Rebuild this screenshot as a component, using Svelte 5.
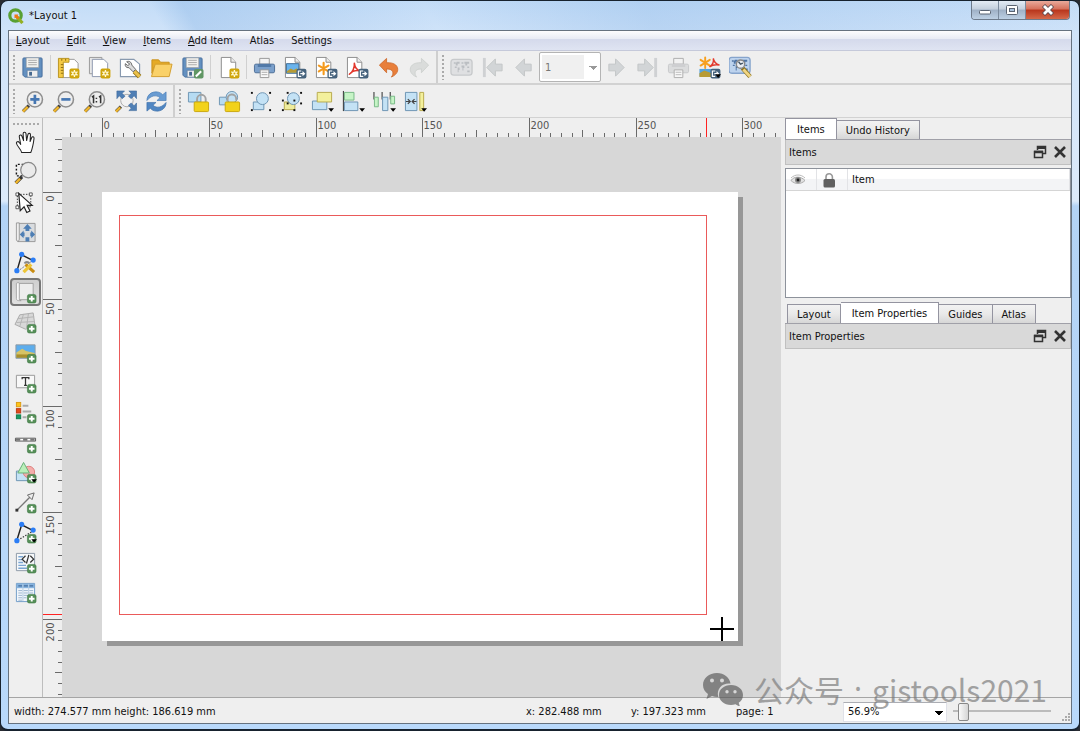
<script>
  // small overlays shared by several icons
  const plus =
    '<rect x="14" y="14" width="9" height="9" rx="2" fill="#568f58" stroke="#3f7a45" stroke-width=".6"/><path d="M18.5 15.6v5.8M15.6 18.5h5.8" stroke="#fff" stroke-width="2"/>';
  const star =
    '<rect x="13" y="13" width="10.4" height="10.4" rx="2" fill="#cfa50c"/><path d="M18.2 14.5v7.4M14.9 16.4l6.6 3.6M14.9 20l6.6-3.6" stroke="#fffbe0" stroke-width="1.4"/><circle cx="18.2" cy="18.2" r="2.3" fill="#fff6c4"/><circle cx="18.2" cy="18.2" r="1" fill="#cfa50c"/>';
  const out =
    '<rect x="13" y="13.4" width="10.4" height="10" rx="2" fill="#45627c"/><path d="M18 15.6h-3v5.6h3M17 18.4h3.4" fill="none" stroke="#fff" stroke-width="1.2"/><path d="M19.3 15.6v5.6l3-2.8z" fill="#fff"/>';
  const drop = '<path d="M18 19h6l-3 3.6z" fill="#000"/>';
  const page =
    '<path d="M3.5 1.5h10l5 5v16h-15z" fill="#fff" stroke="#8b8b8b"/><path d="M13.5 1.5v5h5" fill="#ececec" stroke="#8b8b8b"/>';
  const floppy =
    '<path d="M3 2h18a1 1 0 0 1 1 1v18a1 1 0 0 1-1 1H4l-2-2V3a1 1 0 0 1 1-1z" fill="#6390c0" stroke="#476f9d"/><path d="M5.5 2h13v10h-13z" fill="#f1f1ee" stroke="#999" stroke-width=".6"/><path d="M7.5 4.5h9M7.5 6.8h9M7.5 9.1h9" stroke="#aaa"/><path d="M6.5 15h11v7h-11z" fill="#eee" stroke="#5a7794" stroke-width=".6"/><path d="M8.5 16.5h3v4h-3z" fill="#46698f"/>';
  const lens =
    '<path d="M2.2 22.3l6-6" stroke="#3c3c3c" stroke-width="3.6"/><path d="M2 22.6l5-5" stroke="#efb52c" stroke-width="2.6"/><circle cx="14.5" cy="9.8" r="7.9" fill="#eee" stroke="#8e8e8e" stroke-width="1.6"/>';
  const dots = (x, y, w, h) =>
    [0, 1, 2]
      .flatMap((i) => [0, 1, 2].map((j) => [i, j]))
      .filter(([i, j]) => i !== 1 && j !== 1)
      .map(([i, j]) => `<rect x="${x + (w * i) / 2 - 1}" y="${y + (h * j) / 2 - 1}" width="2" height="2" fill="#111"/>`)
      .join("");
  const printer = (top, body, edge) =>
    `<path d="M7 2.5h10v6H7z" fill="#f4f4f4" stroke="#999"/><path d="M3 8.5h18a1.5 1.5 0 0 1 1.5 1.5v6a1.5 1.5 0 0 1-1.5 1.5H3A1.5 1.5 0 0 1 1.5 16v-6A1.5 1.5 0 0 1 3 8.5z" fill="${body}" stroke="${edge}"/><path d="M5 8.5h14v3H5z" fill="${top}"/><path d="M7.5 14.5h9v8h-9z" fill="#fafafa" stroke="#999"/><path d="M9 17h6M9 19.5h6" stroke="#aaa"/>`;
  const worldMap = (bg, edge, land) =>
    `<rect x="1" y="3.5" width="22" height="16.5" rx="3" fill="${bg}" stroke="${edge}" stroke-width="1.4"/><path d="M4 6.5h2v1.5H4zM7 6h3v2H8v2H6V8zM5 11h2v1.5H5zM8 12h2v2.5H9V17H8zM12 6.5h2V8h-2zM15 6h5v2h-2v2h-2V8h-1zM12 10h3v2.5h-1V15h-1v-3h-1zM18 11h2v1.5h-2zM18 15h2.5v2H18z" fill="${land}"/>`;

  const icons = {
    save: floppy,
    newLayout: `<path d="M6 3.5h12l4 4v15H6z" fill="#fff" stroke="#999"/><path d="M1.5 2.5h11v4h-6v16h-5z" fill="#f5ca45" stroke="#b99421"/><path d="M4 9h2.5M4 12h2.5M4 15h2.5M4 18h2.5M9 3v2M5 3v2" stroke="#8d6d12"/>${star}`,
    duplicate: `<path d="M1.5 1.5h13v17h-13z" fill="#e8e8e8" stroke="#999"/><path d="M4.5 3.5h12l4 4v14h-16z" fill="#fff" stroke="#8c97ad"/>${star}`,
    manager: `<path d="M1.5 3.5h14l6 5v13h-20z" fill="#fff" stroke="#8899ae" stroke-width="1.2"/><path d="M16 16l5.5 5.5" stroke="#8d6d12" stroke-width="5"/><path d="M16 16l5.5 5.5" stroke="#eac14a" stroke-width="3.2"/><path d="M8 6c2.5-1.2 5 .2 5.4 3.5l4 4.5-2.7 2.5-4.2-4.3C7.2 12.5 6 10.3 6.6 8l2.6 2 2-1.6z" fill="#dcdcdc" stroke="#666"/>`,
    folder: `<path d="M2 4h7l2 2.5h9V10H5l-3 8z" fill="#e5aa26" stroke="#c8901a"/><path d="M5.5 8.5h17.5l-3 13H1.5z" fill="#fad169" stroke="#d39e2d"/>`,
    saveAs: `${floppy}<rect x="13.5" y="13.5" width="10" height="10" rx="2" fill="#609663"/><path d="M15.5 21.5l5.5-5.5" stroke="#fff" stroke-width="2.2"/>`,
    addPage: `<g transform="translate(1)">${page}</g>${star}`,
    print: printer("#527aa8", "#7ba0cb", "#4c6e97"),
    printOff: `<g opacity=".75">${printer("#c3c5c7", "#d5d6d7", "#babcbe")}</g>`,
    exportImage: `<g transform="translate(-2)">${page}</g><path d="M2.5 8h13v10h-13z" fill="#6ab3ec" stroke="#3c6b94"/><path d="M3 16l4-3 3 1.5 3-1.5 2.5 1v3.5H3z" fill="#b79b34"/>${out}`,
    exportSvg: `<g transform="translate(-2)">${page}</g><path d="M9 7v12M4 10l10 6M4 16l10-6" stroke="#f49a1d" stroke-width="2.2" stroke-linecap="round"/>${out}`,
    exportPdf: `<g transform="translate(-2)">${page}</g><path d="M3.5 19c3.5-2 5.7-7 5.2-11.5.5 4.5 3 7.5 6.800 8.200-4-1.200-8.500-.5-12 3.300z" fill="none" stroke="#e2382d" stroke-width="1.6" stroke-linejoin="round"/>${out}`,
    undo: `<path d="M2.5 9.500l7.500-7v4.500c9-.5 12.500 4 11.500 8.500-.6 2.600-3 5-6.500 6.500 2.700-3.500 2.800-8.500-5-8.500v4z" fill="#e87f3b" stroke="#cb6424" stroke-width=".8"/>`,
    redo: `<path d="M21.5 9.500l-7.500-7v4.500c-9-.5-12.500 4-11.500 8.500.6 2.600 3 5 6.500 6.500-2.700-3.500-2.800-8.500 5-8.500v4z" fill="#dadcdb" stroke="#c9cdcb" stroke-width=".8"/>`,
    atlasOff: worldMap("#dfe0e2", "#c8cacc", "#bbbec2"),
    first: `<path d="M2 2h3v20H2z" fill="#cfd1d3"/><path d="M6 12l9-9v5.500h7v7h-7V21z" fill="#d2d5d7" stroke="#c2c5c7"/>`,
    prev: `<path d="M4 12l9-9v5.500h7v7h-7V21z" fill="#d2d5d7" stroke="#c2c5c7"/>`,
    next: `<path d="M20 12l-9-9v5.500H4v7h7V21z" fill="#d2d5d7" stroke="#c2c5c7"/>`,
    last: `<path d="M19 2h3v20h-3z" fill="#cfd1d3"/><path d="M18 12L9 3v5.500H2v7h7V21z" fill="#d2d5d7" stroke="#c2c5c7"/>`,
    exportAtlas: `<path d="M7.500 1.500v11M2.700 4l9.600 6M2.700 10l9.600-6" stroke="#f7a01e" stroke-width="2" stroke-linecap="round"/><path d="M12 11.500c3-2 4.500-6 4-9 .5 4 3 6 6.500 7-4-.8-7.500-.3-10.500 2z" fill="none" stroke="#e2382d" stroke-width="1.500"/><path d="M1.500 13.500h13v8h-13z" fill="#55a3dd"/><path d="M1.500 18l5-3 8 3v4h-13z" fill="#b79b34"/>${out}<path d="M18 19h6l-3 4z" fill="#000"/>`,
    atlasSettings: `<g transform="translate(-1 -2)">${worldMap("#bdd3ee", "#86a4cc", "#4f74a4")}</g><path d="M14 12.500l8 9" stroke="#8d7420" stroke-width="4.600"/><path d="M15 14l7 7.500" stroke="#f0d584" stroke-width="3"/><circle cx="12" cy="8.500" r="4.300" fill="#e9edf3" stroke="#888" stroke-width="1.400"/><path d="M10 6l2 2.500 2.500-1" fill="none" stroke="#456" stroke-width="1.500"/>`,

    zoomIn: `${lens}<path d="M14.500 5v9.600M9.700 9.800h9.600" stroke="#4677b2" stroke-width="2.800"/>`,
    zoomOut: `${lens}<path d="M9.700 9.800h9.600" stroke="#4677b2" stroke-width="2.800"/>`,
    zoomActual: `${lens}<path d="M9.300 7.500l1.700-1.200v7.400M16.700 7.500l1.700-1.200v7.400M14 8v1.500M14 11.500V13" fill="none" stroke="#333" stroke-width="1.600"/>`,
    zoomFull: `<path d="M2.200 22.300l5-5" stroke="#3c3c3c" stroke-width="3.400"/><path d="M2 22.600l4.500-4.500" stroke="#efb52c" stroke-width="2.400"/><circle cx="13.500" cy="11" r="6.500" fill="#f2f2f2" stroke="#aaa"/><path d="M3 1h8L8.500 3.500l3 3-3 2.500-3-3L3 9zM23.500 1h-8L18 3.500l-3 3 3 2.500 3-3 2.500 3zM23.500 21.500h-8l2.500-2.500-3-3 3-2.500 3 3 2.500-3z" fill="#4f7fb5" stroke="#3b6799" stroke-width=".6"/>`,
    refresh: `<path d="M2 11C2 5 7 1.500 12.500 2c2.500.2 4.500 1.300 6 2.900L22 2v9h-9.500l3.200-3C11.500 4.500 6 6 2 11z" fill="#699cd2" stroke="#477bb5" stroke-width=".7"/><path d="M22 13c0 6-5 9.500-10.500 9-2.500-.2-4.500-1.300-6-2.900L2 22v-9h9.500l-3.200 3c4.200 3.500 9.700 2 13.700-3z" fill="#4f86c3" stroke="#3d70aa" stroke-width=".7"/>`,
    lock: `<path d="M1.500 2.500h13v10h-13z" fill="#b6dbf2" stroke="#6f95b4"/><path d="M10.500 13V9.500a4.500 4.500 0 0 1 9 0V13" fill="none" stroke="#a2a2a2" stroke-width="2"/><rect x="7.500" y="12.500" width="15" height="10" rx="1" fill="#f2d21b" stroke="#c9a60c"/>`,
    unlock: `<path d="M1.500 7.500h10v8h-10z" fill="#b6dbf2" stroke="#6f95b4"/><circle cx="14.500" cy="7.500" r="6" fill="#c4e2f5" stroke="#6f95b4"/><path d="M10 12V9.500a4.500 4.500 0 0 1 9-.5v2" fill="none" stroke="#a2a2a2" stroke-width="2"/><rect x="7.500" y="12.500" width="15" height="10" rx="1" fill="#f2d21b" stroke="#c9a60c"/>`,
    group: `<path d="M4.500 12.500h11v8h-11z" fill="#c4e2f5" stroke="#6c93b3"/><circle cx="14" cy="9" r="6.200" fill="#c4e2f5" stroke="#6c93b3"/>${dots(3, 3, 19, 18)}`,
    ungroup: `<path d="M4.500 12.500h11v8h-11z" fill="#eeec9d" stroke="#b7a94c"/><circle cx="14" cy="9" r="6.200" fill="#c4e2f5" stroke="#6c93b3"/>${dots(8, 3, 14, 11)}${dots(3, 11, 12, 10)}`,
    raise: `<path d="M1.500 11.500h15v9h-15z" fill="#c4e2f5" stroke="#6c93b3"/><path d="M6.500 2.500h15v10h-15z" fill="#f3f09c" stroke="#b7a94c"/>${drop}`,
    align: `<path d="M1.500 1v21" stroke="#444" stroke-width="1.200"/><path d="M2.500 2.500h10v8h-10z" fill="#c6f4c6" stroke="#77b886"/><path d="M2.500 12.500h14v9h-14z" fill="#c4e2f5" stroke="#6c93b3"/>${drop}`,
    distribute: `<path d="M1 2v8M9.500 2v8M18 2v8" stroke="#444" stroke-width="1.200"/><path d="M1.500 7.500h4v10h-4zM18.500 6.500h4v8h-4z" fill="#c6f4c6" stroke="#77b886"/><path d="M10 7.500h5.500v14H10z" fill="#c4e2f5" stroke="#6c93b3"/>${drop}`,
    resize: `<path d="M1.500 2.500h12v19h-12z" fill="#c4e2f5" stroke="#6c93b3"/><path d="M16.500 2.500h4v19h-4z" fill="#f3f09c" stroke="#b7a94c"/><path d="M2 12h4M4 9.500L6.500 12 4 14.500M13 12H9M11 9.500L8.500 12l2.500 2.500" fill="none" stroke="#444" stroke-width="1.300"/>${drop}`,

    pan: `<path d="M8 22.500c-.5-3.500-5-6.500-5.500-10 0-1.500 2-2 3-.5l1.500 2L5.500 6c-.2-2 2-2.500 2.700-.8L10 10 9.500 3c0-2 2.600-2.300 3-.3L13.200 10l1.300-6.300c.4-1.800 2.700-1.500 2.700.3L16.800 11l1.600-4c.7-1.600 2.700-1 2.500.8-.5 4-1.500 10-3.400 14.700z" fill="#fff" stroke="#222" stroke-width="1.100" stroke-linejoin="round"/>`,
    zoom: `<path d="M9 15.500H2.500V3.500H12" fill="none" stroke="#111" stroke-width="1.500" stroke-dasharray="2 2"/><path d="M1.800 23l6.500-6.500" stroke="#333" stroke-width="3.600"/><path d="M1.800 23l4.500-4.500" stroke="#efb52c" stroke-width="2.600"/><circle cx="15" cy="9.500" r="8" fill="#e9e9e9" fill-opacity=".92" stroke="#888" stroke-width="1.300"/>`,
    select: `<path d="M3.500 3.500h14v13h-14z" fill="none" stroke="#333" stroke-dasharray="1.500 1.500"/><path d="M2 2h3v3H2zM16 2h3v3h-3zM2 15.500h3v3H2z" fill="#fff" stroke="#333" stroke-width=".8"/><path d="M5 2.500l1.500 18 4-4 2.800 6 3.400-1.600-3-5.900h5.300z" fill="#fff" stroke="#222" stroke-width="1.200"/>`,
    moveContent: `<path d="M3.500 2.500h18.500v19H4z" fill="#d9dcdf" stroke="#999"/><path d="M2.500 2h3v17c0 3-3 2-3 1z" fill="#eee" stroke="#888" stroke-width=".8"/><path d="M14 3l4.500 5H16v2.500h-4V8H9.500zM12 17h4v4.500h-4zM6 14l4-4v2h1v4h-1v2zM22 14l-4-4v2h-1v4h1v2z" fill="#4d7eb4"/>`,
    editNodes: `<path d="M3 21L8 4l12 6" fill="none" stroke="#222" stroke-width="1.500"/><path d="M4 21l14-10" stroke="#555" stroke-dasharray="1.500 1.500"/><circle cx="8" cy="3.500" r="2.700" fill="#2b7df5"/><circle cx="20" cy="9.500" r="2.700" fill="#2b7df5"/><circle cx="3" cy="20.500" r="2.700" fill="#2b7df5"/><path d="M12 14l9 8" stroke="#c98c12" stroke-width="3.300"/><path d="M10 22l8-8" stroke="#edc637" stroke-width="3.500"/><path d="M11 13c1-2 4-2 5 0" fill="none" stroke="#888" stroke-width="2"/>`,
    addMap: `<path d="M5 2.500h15v17H5z" fill="#ededed" stroke="#a0a0a0"/><path d="M2.500 2.500c1-1 3-1 3 0v16c0 1.500 1 2 2 2H5c-1.500 0-2.500-.8-2.500-2z" fill="#f8f8f8" stroke="#999" stroke-width=".8"/>${plus}`,
    add3d: `<path d="M6 4l14-2 2 14-10 3-11-5z" fill="#d8d8d8" stroke="#aaa"/><path d="M4 8l17-2M2.500 12l19-1M10 3L6 16M15 3l-2 15" stroke="#b4b4b4" fill="none"/>${plus}`,
    addPicture: `<path d="M2 4h20v14H2z" fill="#5dadec" stroke="#8f9aa2"/><path d="M2.500 12l6-4 4 2.500 9 2V17h-19z" fill="#d6c365"/><path d="M2.500 14h19v3.500h-19z" fill="#a98f2b"/>${plus}`,
    addLabel: `<path d="M2.500 4.500h19v13h-19z" fill="#f8f8f8" stroke="#999"/><path d="M8.500 8.500V7h7v1.500M12 7v8M10.500 15h3" fill="none" stroke="#333" stroke-width="1.300"/>${plus}`,
    addLegend: `<rect x="2.500" y="1.500" width="4.500" height="4.500" fill="#fcc51a" stroke="#dc9a13"/><rect x="2.500" y="8" width="4.500" height="4.500" fill="#e24a1b" stroke="#b93814"/><rect x="2.500" y="14.500" width="4.500" height="4" fill="#159a62" stroke="#0e7c4c"/><path d="M9 5h6M9 11h9M9 17h4" stroke="#aaa" stroke-width="2"/>${plus}`,
    addScale: `<path d="M1.500 7.500h21v3h-21z" fill="#fff" stroke="#555"/><path d="M2 9h4.500M9.500 9h4.500M17 9h4.500" stroke="#777" stroke-width="2.600"/>${plus}`,
    addShape: `<path d="M2.500 10.500h13v10h-13z" fill="#c4e2f5" stroke="#6c93b3"/><circle cx="15.500" cy="11.500" r="6" fill="#f5a6a3" fill-opacity=".9" stroke="#dc7f7d"/><path d="M10 1.500l6 11H4z" fill="#b9efb9" stroke="#66ad77"/>${plus}<path d="M18 19h6l-3 3.500z" fill="#000"/>`,
    addArrow: `<path d="M3 20L18 5" stroke="#777" stroke-width="1.400"/><path d="M21 2l-2.200 7-4.800-4.800z" fill="#eee" stroke="#666"/><rect x="1.500" y="18.500" width="3" height="3" fill="#333"/>${plus}`,
    addNode: `<path d="M3 20L8 4l12 6" fill="none" stroke="#222" stroke-width="1.500"/><path d="M4 20l15-9" stroke="#333" stroke-width="1.300" stroke-dasharray="1.500 1.500"/><circle cx="8" cy="3.500" r="2.700" fill="#2b7df5"/><circle cx="20" cy="9.500" r="2.700" fill="#2b7df5"/><circle cx="3" cy="20.500" r="2.700" fill="#2b7df5"/>${plus}<path d="M18 19h6l-3 3.500z" fill="#000"/>`,
    addHtml: `<path d="M2.500 2.500h19v18h-19z" fill="#f6f8fa" stroke="#8c99a6"/><path d="M4.500 6h5M4.500 9h4M4.500 12h5M4.500 15h8M4.500 18h9" stroke="#7ba5d2" stroke-width="1.500"/><path d="M12 5L8.500 8.500 12 12M17 5l3.500 3.500L17 12M15.500 4l-2.500 9" fill="none" stroke="#333" stroke-width="1.300"/>${plus}`,
    addTable: `<path d="M2.500 2.500h19v19h-19z" fill="#f1f6fb" stroke="#6f9bc8"/><path d="M3 3h18v4.500H3z" fill="#86b3df"/><path d="M4.500 5h4M10 5h4.500M16 5h4" stroke="#456f9e" stroke-width="1.300"/><path d="M4.500 10h4M4.500 12.500h4M4.500 15h4M4.500 17.500h4M4.500 20h4M10 10h4.500M10 12.500h4.500M10 15h4.500M10 17.500h3M16 10h4M16 12.500h4" stroke="#9ab4cf"/><path d="M9.300 3v18M15.300 3v18" stroke="#b7cde2"/>${plus}`,
  };

  const menus = ["Layout", "Edit", "View", "Items", "Add Item", "Atlas", "Settings"];
  const plainMenus = ["Atlas", "Settings"];

  const layoutBar = [
    ["save"],
    ["newLayout", "duplicate", "manager", "folder", "saveAs"],
    ["addPage"],
    ["print", "exportImage", "exportSvg", "exportPdf", "undo", "redo"],
  ];
  const atlasLeft = ["atlasOff", "first", "prev"];
  const atlasRight = ["next", "last", "printOff", "exportAtlas", "atlasSettings"];
  const navBar = ["zoomIn", "zoomOut", "zoomActual", "zoomFull", "refresh"];
  const actionsBar = ["lock", "unlock", "group", "ungroup", "raise", "align", "distribute", "resize"];
  const tools = [
    "pan", "zoom", "select", "moveContent", "editNodes", "addMap", "add3d", "addPicture",
    "addLabel", "addLegend", "addScale", "addShape", "addArrow", "addNode", "addHtml", "addTable",
  ];
  let activeTool = $state("addMap");

  let itemsTab = $state("Items");
  let propsTab = $state("Item Properties");
  let zoomLevel = $state(6);

  // ruler ticks: one every 5 mm, longer at 25, full height at 50
  const pxPerMm = 2.135;
  function ticks(from, to, origin) {
    const list = [];
    for (let mm = from; mm <= to; mm += 5) {
      list.push({ mm, pos: Math.round(origin + mm * pxPerMm) + 0.5, major: mm % 50 === 0, mid: mm % 25 === 0 });
    }
    return list;
  }
  const hTicks = ticks(-15, 315, 59);
  const vTicks = ticks(-25, 235, 74);
</script>

{#snippet icon(name)}
  <svg class="icon" viewBox="0 0 24 24" aria-hidden="true">{@html icons[name]}</svg>
{/snippet}

{#snippet tool(name)}
  <button class="tool" aria-label={name}>{@render icon(name)}</button>
{/snippet}

{#snippet dockTitle(title)}
  <div class="dock-title">
    <span>{title}</span>
    <button class="dock-btn" aria-label="Float {title}">
      <svg viewBox="0 0 14 14"><path d="M4.500 5V1.500h8v7H10" fill="none" stroke="#333" stroke-width="1.500" /><path d="M4 2.500h9" stroke="#333" stroke-width="3" /><path d="M1.500 6.500h8v6h-8z" fill="none" stroke="#333" stroke-width="1.500" /><path d="M1 7h9" stroke="#333" stroke-width="2.500" /></svg>
    </button>
    <button class="dock-btn" aria-label="Close {title}">
      <svg viewBox="0 0 14 14"><path d="M2 2l10 10M12 2L2 12" stroke="#333" stroke-width="2.600" /></svg>
    </button>
  </div>
{/snippet}

<div class="window">
  <header class="titlebar">
    <svg class="logo" viewBox="0 0 16 16" aria-hidden="true">
      <circle cx="7.500" cy="7.500" r="5.700" fill="none" stroke="#58a032" stroke-width="3.200" />
      <path d="M8 8l6.500 7" stroke="#93b023" stroke-width="3.200" />
      <path d="M6.500 6.500h4l-1 1 2 2-2 2-2-2-1 1z" fill="#ee7913" />
    </svg>
    <span class="title">*Layout 1</span>
    <div class="controls">
      <button aria-label="Minimize"><svg viewBox="0 0 14 12"><rect x="1.500" y="6.500" width="11" height="3.500" rx="1" fill="#fff" stroke="#5a6472" /></svg></button>
      <button aria-label="Maximize"><svg viewBox="0 0 14 12"><rect x="1.500" y="1.500" width="11" height="9" rx="1" fill="#fff" stroke="#5a6472" /><rect x="4.500" y="4.500" width="5" height="3" fill="#a9c2dd" stroke="#5a6472" /></svg></button>
      <button class="close" aria-label="Close"><svg viewBox="0 0 14 12"><path d="M2.500 1.500L11.500 10.500M11.500 1.500L2.500 10.500" stroke="#5b4a50" stroke-width="4.400" /><path d="M3 2l8 8M11 2l-8 8" stroke="#fff" stroke-width="2.800" /></svg></button>
    </div>
  </header>

  <div class="client">
    <nav class="menubar">
      {#each menus as menu}
        <button>
          {#if plainMenus.includes(menu)}{menu}{:else}<u>{menu[0]}</u>{menu.slice(1)}{/if}
        </button>
      {/each}
    </nav>

    <div class="toolbar-row">
      <div class="toolbar">
        <i class="handle"></i>
        {#each layoutBar as group, i}
          {#if i > 0}<i class="sep"></i>{/if}
          {#each group as name}{@render tool(name)}{/each}
        {/each}
      </div>
      <div class="toolbar">
        <i class="handle"></i>
        {#each atlasLeft as name}{@render tool(name)}{/each}
        <select class="page-select" aria-label="Atlas page" disabled><option>1</option></select>
        {#each atlasRight as name}{@render tool(name)}{/each}
      </div>
    </div>
    <div class="toolbar-row last">
      <div class="toolbar">
        <i class="handle"></i>
        {#each navBar as name}{@render tool(name)}{/each}
      </div>
      <div class="toolbar">
        <i class="handle"></i>
        {#each actionsBar as name}{@render tool(name)}{/each}
      </div>
    </div>

    <main class="main">
      <div class="toolbox">
        <i class="handle-h"></i>
        {#each tools as name}
          <button
            class="side-tool"
            class:active={activeTool === name}
            aria-label={name}
            onclick={() => (activeTool = name)}>{@render icon(name)}</button
          >
        {/each}
      </div>

      <div class="view">
        <svg class="ruler-h">
          {#each hTicks as t}
            <line x1={t.pos} x2={t.pos} y1={t.major ? 0 : t.mid ? 12 : 15} y2="19" />
            {#if t.major}<text x={t.pos + 1} y="11">{t.mm}</text>{/if}
          {/each}
          <line class="marker" x1="663.500" x2="663.500" y1="0" y2="19" />
        </svg>
        <div class="view-body">
          <svg class="ruler-v">
            <g transform="translate(0 -19)">
              {#each vTicks as t}
                <line y1={t.pos} y2={t.pos} x1={t.major ? 0 : t.mid ? 12 : 15} x2="19" />
                {#if t.major}
                  <text text-anchor="end" transform="translate(11 {t.pos + 3}) rotate(-90)">{t.mm}</text>
                {/if}
              {/each}
              <line class="marker" x1="0" x2="19" y1="496.500" y2="496.500" />
            </g>
          </svg>
          <div class="canvas">
            <div class="page">
              <div class="map-frame"></div>
              <svg class="cursor" viewBox="0 0 24 24"><path d="M12 0v24M0 12h24" stroke="#000" stroke-width="2" /></svg>
            </div>
          </div>
        </div>
      </div>

      <aside class="docks">
        <div class="tabs">
          {#each ["Items", "Undo History"] as tab}
            <button class:selected={itemsTab === tab} onclick={() => (itemsTab = tab)}>{tab}</button>
          {/each}
        </div>
        {@render dockTitle("Items")}
        <div class="item-list">
          <table>
            <thead>
              <tr>
                <th class="narrow" aria-label="Visible">
                  <svg viewBox="0 0 16 14"><path d="M1 7.500C4 3 11 3 15 7.500 11 11.500 5 11.500 1 7.500z" fill="#e3e3e3" stroke="#aaa" /><circle cx="8" cy="7" r="3" fill="#888" /><circle cx="8" cy="7" r="1.400" fill="#222" /><path d="M1 5c4-4 10-4 14 0" fill="none" stroke="#bbb" /></svg>
                </th>
                <th class="narrow" aria-label="Locked">
                  <svg viewBox="0 0 16 16"><path d="M5 8V5a3.200 3.200 0 0 1 6.400 0v3" fill="none" stroke="#999" stroke-width="1.600" /><rect x="2.500" y="7" width="11.500" height="8.500" rx="1.500" fill="#606060" /></svg>
                </th>
                <th>Item</th>
              </tr>
            </thead>
          </table>
        </div>
        <div class="tabs lower">
          {#each ["Layout", "Item Properties", "Guides", "Atlas"] as tab}
            <button class:selected={propsTab === tab} onclick={() => (propsTab = tab)}>{tab}</button>
          {/each}
        </div>
        {@render dockTitle("Item Properties")}
      </aside>
    </main>

    <footer class="statusbar">
      <span class="size">width: 274.577 mm height: 186.619 mm</span>
      <span class="coord">x: 282.488 mm</span>
      <span class="coord">y: 197.323 mm</span>
      <span class="page-no">page: 1</span>
      <select class="zoom-select" aria-label="Zoom"><option>56.9%</option></select>
      <input class="zoom-slider" type="range" aria-label="Zoom level" bind:value={zoomLevel} />
      <svg class="grip" viewBox="0 0 10 10" aria-hidden="true"><path d="M7 1h2M7 4h2M7 7h2M4 4h2M4 7h2M1 7h2" stroke="#aaa" stroke-width="2" /></svg>
    </footer>
  </div>

  <div class="watermark">
    <svg viewBox="0 0 42 34" aria-hidden="true">
      <path fill-rule="evenodd" d="M15 1C7 1 1 6 1 13c0 4 2 7 5 9l-1.500 5 5.500-3c2 .7 4 1 6.300.9C14 16 21 10.500 28.500 11.500 27.500 5.500 22 1 15 1zM10 6.500a2 2 0 1 1 0 4 2 2 0 0 1 0-4zM20 6.500a2 2 0 1 1 0 4 2 2 0 0 1 0-4z" />
      <path fill-rule="evenodd" d="M29 13c-7 0-12 4.400-12 10s5 10 12 10c1.600 0 3-.2 4.400-.7l4.600 2.500-1.300-4C39.500 29 41 26.200 41 23c0-5.600-5-10-12-10zM25 18a1.700 1.700 0 1 1 0 3.400 1.700 1.700 0 0 1 0-3.400zM33 18a1.700 1.700 0 1 1 0 3.400 1.700 1.700 0 0 1 0-3.400z" />
    </svg>
    <span>公众号</span>
    <span class="dot">·</span>
    <span>gistools2021</span>
  </div>
</div>

<style>
  :global(body) {
    margin: 0;
    background: #2a2d33;
  }

  .window {
    position: relative;
    display: flex;
    flex-direction: column;
    box-sizing: border-box;
    min-height: 100vh;
    padding: 0 7px 5px;
    border: 1px solid #17222e;
    border-bottom-width: 2px;
    border-radius: 8px;
    background:
      linear-gradient(60deg, transparent 15%, rgba(120, 170, 225, 0.3) 18%, transparent 40%, rgba(120, 170, 225, 0.25) 60%, transparent) 0 0 / 100% 30px no-repeat,
      linear-gradient(#c3dcf7 0, #cfe3f9 30px, #dceafa 200px, #b3d3f5 205px, #b9d9fb 100%);
    font-family: "DejaVu Sans Condensed", "Noto Sans", sans-serif;
    font-size: 11px;
    color: #111;
  }

  button,
  select {
    font: inherit;
    color: inherit;
  }

  button {
    margin: 0;
    padding: 0;
    border: none;
    background: none;
  }

  .titlebar {
    display: flex;
    align-items: center;
    height: 29px;
  }

  .logo {
    width: 16px;
    height: 16px;
  }

  .title {
    flex: 1;
    margin-left: 5px;
    text-shadow: 0 0 6px #fff;
  }

  .controls {
    display: flex;
    align-self: flex-start;
    margin-right: 2px;
    border: 1px solid #6d7a8a;
    border-top: none;
    border-radius: 0 0 4px 4px;
    overflow: hidden;
  }

  .controls button {
    display: flex;
    align-items: center;
    justify-content: center;
    width: 27px;
    height: 18px;
    border-right: 1px solid #7b8b9e;
    background: linear-gradient(#e3ecf5, #c3cfdd 45%, #9fb1c6 50%, #bdd0e4);
  }

  .controls svg {
    width: 14px;
    height: 12px;
  }

  .controls .close {
    width: 43px;
    border-right: none;
    background: linear-gradient(#e9aa9b, #d5705b 45%, #b8351c 50%, #d5694a);
  }

  .client {
    flex: 1;
    display: flex;
    flex-direction: column;
    border: 1px solid #66727f;
    background: #efefef;
  }

  .menubar {
    display: flex;
    gap: 1px;
    height: 19px;
    border-bottom: 1px solid #c5c9da;
    background: linear-gradient(#fdfdfe, #e9ecf5 40%, #d5daec 45%, #dfe4f2);
  }

  .menubar button {
    padding: 0 8px 0 7px;
  }

  .menubar button + button {
    padding-left: 8px;
  }

  .toolbar-row {
    display: flex;
    height: 32px;
    border-bottom: 2px solid #d2d2d2;
  }

  .toolbar-row.last {
    border-bottom-width: 1px;
  }

  .toolbar {
    display: flex;
    align-items: center;
    padding-right: 1px;
  }

  .toolbar + .toolbar {
    border-left: 2px solid #cfcfcf;
  }

  .handle {
    width: 4px;
    height: 26px;
    margin: 0 1px 0 3px;
    background: radial-gradient(circle, #aaa 1px, transparent 1px) 0 0 / 4px 4px;
  }

  .sep {
    width: 1px;
    height: 24px;
    margin: 0 2px;
    background: #d0d0d0;
  }

  .tool {
    display: flex;
    align-items: center;
    justify-content: center;
    width: 31px;
    height: 30px;
  }

  .icon {
    width: 23px;
    height: 23px;
  }

  .page-select {
    width: 62px;
    height: 30px;
    padding-left: 5px;
    border: 1px solid #b4b4b4;
    border-radius: 2px;
    appearance: none;
    background:
      linear-gradient(#f0f0f0, #f0f0f0) 2px 2px / 42px 24px no-repeat,
      conic-gradient(from 315deg at 50% 100%, #999 90deg, transparent 0) 49px 13px / 8px 4px no-repeat,
      #fff;
    color: #777;
    opacity: 1;
  }

  .main {
    flex: 1;
    display: flex;
  }

  .toolbox {
    display: flex;
    flex-direction: column;
    align-items: center;
    width: 33px;
    border-right: 1px solid #bdbdbd;
  }

  .handle-h {
    width: 28px;
    height: 4px;
    margin: 4px 0 2px;
    background: radial-gradient(circle, #aaa 1px, transparent 1px) 0 0 / 4px 4px;
  }

  .side-tool {
    display: flex;
    align-items: center;
    justify-content: center;
    box-sizing: border-box;
    width: 31px;
    height: 28px;
    margin-bottom: 2px;
    border: 1px solid transparent;
    border-radius: 4px;
  }

  .side-tool.active {
    border: 2px solid #777;
    background: linear-gradient(#cfcfcf, #e0e0e0);
  }

  .view {
    flex: 1;
    display: flex;
    flex-direction: column;
    min-width: 0;
  }

  .ruler-h {
    width: 100%;
    height: 19px;
  }

  .ruler-v {
    flex: none;
    width: 19px;
    height: 100%;
  }

  .ruler-h line,
  .ruler-v line {
    stroke: #6a6a6a;
  }

  .ruler-h text,
  .ruler-v text {
    fill: #555;
    font-size: 11px;
  }

  .ruler-h .marker,
  .ruler-v .marker {
    stroke: #f22;
  }

  .view-body {
    flex: 1;
    display: flex;
  }

  .canvas {
    position: relative;
    flex: 1;
    background: #d7d7d7;
  }

  .page {
    position: absolute;
    left: 40px;
    top: 55px;
    width: 636px;
    height: 449px;
    background: #fff;
    box-shadow: 5px 5px 0 #979797;
  }

  .map-frame {
    position: absolute;
    left: 17px;
    top: 23px;
    width: 586px;
    height: 398px;
    border: 1px solid #ea5a5a;
  }

  .cursor {
    position: absolute;
    left: 608px;
    top: 425px;
    width: 24px;
    height: 24px;
  }

  .docks {
    display: flex;
    flex-direction: column;
    width: 286px;
    margin-left: 4px;
  }

  .tabs {
    display: flex;
    align-items: flex-end;
    height: 21px;
    border-bottom: 1px solid #a0a0a8;
  }

  .tabs button {
    height: 19px;
    padding: 0 9px;
    border: 1px solid #9494a0;
    border-left-width: 0;
    border-bottom: none;
    background: linear-gradient(#f2f2f2, #e9e9e9 50%, #d6d6d6);
  }

  .tabs button:first-child {
    border-left-width: 1px;
  }

  .tabs .selected {
    height: 21px;
    padding: 0 11px;
    background: #fff;
  }

  .tabs.lower {
    margin-top: 4px;
    padding-left: 2px;
  }

  .dock-title {
    display: flex;
    align-items: center;
    gap: 6px;
    height: 24px;
    padding: 0 3px;
    border: 1px solid #c0c0c0;
    border-top: none;
    background: #d9d9d9;
  }

  .dock-title span {
    flex: 1;
  }

  .dock-btn,
  .dock-btn svg {
    display: block;
    width: 14px;
    height: 14px;
  }

  .item-list {
    height: 128px;
    margin-top: 3px;
    border: 1px solid #8d929b;
    background: #fff;
  }

  .item-list table {
    width: 100%;
    border-collapse: collapse;
  }

  .item-list th {
    height: 21px;
    padding: 0 4px;
    border-right: 1px solid #e2e3e6;
    border-bottom: 1px solid #d5d5d5;
    background: linear-gradient(#fff 45%, #f3f4f6 50%);
    font-weight: normal;
    text-align: left;
  }

  .item-list .narrow {
    width: 22px;
  }

  .item-list th svg {
    display: block;
    width: 16px;
    height: 16px;
  }

  .statusbar {
    display: flex;
    align-items: center;
    height: 23px;
    padding-top: 2px;
    border-top: 1px solid #a5a5a5;
  }

  .size {
    flex: 1;
    padding-left: 5px;
  }

  .coord {
    width: 105px;
  }

  .page-no {
    width: 107px;
  }

  .zoom-select {
    width: 104px;
    height: 20px;
    padding: 0 4px;
    border: 1px solid #e0e1e8;
    border-top-color: #abadb3;
    appearance: none;
    background: conic-gradient(from 315deg at 50% 100%, #000 90deg, transparent 0) 91px 8px / 8px 4px no-repeat, #fff;
  }

  /* triangles drawn by the gradients above point down */
  .page-select,
  .zoom-select {
    cursor: default;
  }

  .zoom-slider {
    width: 98px;
    height: 18px;
    margin: 0 10px 0 6px;
    appearance: none;
    background: linear-gradient(#bbb, #bbb) 0 7px / 100% 2px no-repeat;
  }

  .zoom-slider::-webkit-slider-thumb {
    appearance: none;
    width: 11px;
    height: 18px;
    border: 1px solid #888;
    border-radius: 2px;
    background: linear-gradient(90deg, #fafafa, #d5d5d5);
  }

  .grip {
    align-self: flex-end;
    width: 10px;
    height: 10px;
  }

  .watermark {
    position: absolute;
    right: 32px;
    bottom: 20px;
    display: flex;
    align-items: center;
    gap: 10px;
    color: #777;
    font-family: "Noto Sans CJK SC", "Noto Sans", sans-serif;
    font-size: 30px;
    line-height: 40px;
    opacity: 0.65;
    pointer-events: none;
  }

  .watermark .dot {
    font-family: "Noto Sans", sans-serif;
  }

  .watermark svg {
    width: 42px;
    height: 34px;
    fill: #555;
  }
</style>
